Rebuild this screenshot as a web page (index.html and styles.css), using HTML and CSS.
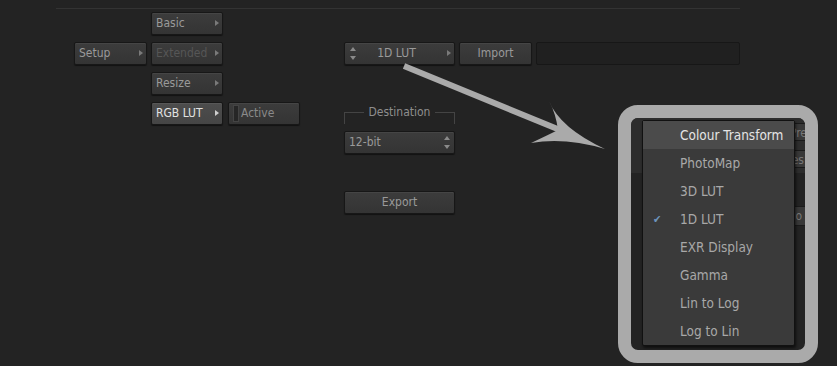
FILE: index.html
```html
<!DOCTYPE html>
<html lang="en">
<head>
    <meta charset="UTF-8">
    <title>RGB LUT Setup</title>
    <link rel="stylesheet" href="styles.css">
</head>
<body>
    <div class="rule"></div>
    <div class="panel">
        <div class="col col-setup">
            <div class="btn btn-menu">Setup<span class="tri"></span></div>
        </div>
        <div class="col col-sub">
            <div class="btn btn-menu">Basic<span class="tri"></span></div>
            <div class="btn btn-menu disabled">Extended<span class="tri"></span></div>
            <div class="btn btn-menu">Resize<span class="tri"></span></div>
            <div class="btn btn-menu selected">RGB LUT<span class="tri"></span></div>
        </div>
        <div class="col col-active">
            <div class="btn btn-toggle"><span class="led"></span>Active</div>
        </div>
        <div class="col col-lut">
            <div class="lut-row">
                <div class="btn btn-lut">
                    <span class="spin spin-left"><i class="up"></i><i class="down"></i></span>
                    1D LUT<span class="tri"></span>
                </div>
                <div class="btn btn-import">Import</div>
                <div class="path-field"></div>
            </div>
            <div class="group">
                <div class="group-title"><span>Destination</span></div>
            </div>
            <div class="btn btn-select">12-bit
                <span class="spin spin-right"><i class="up"></i><i class="down"></i></span>
            </div>
            <div class="btn btn-export">Export</div>
        </div>
    </div>

    <!-- zoomed call-out of the LUT type menu -->
    <div class="callout">
        <div class="callout-band"></div>
        <div class="peek peek-1">Pre</div>
        <div class="peek peek-2">es</div>
        <div class="peek peek-3">o</div>
        <ul class="menu">
            <li class="hover">Colour Transform</li>
            <li>PhotoMap</li>
            <li>3D LUT</li>
            <li class="checked">1D LUT</li>
            <li>EXR Display</li>
            <li>Gamma</li>
            <li>Lin to Log</li>
            <li>Log to Lin</li>
        </ul>
    </div>

    <svg class="arrow" width="837" height="366" viewBox="0 0 837 366">
        <line x1="404" y1="66" x2="560" y2="130" stroke="#aaaaaa" stroke-width="6"/>
        <path d="M549 101 Q560 128 605 149 Q565 137 531 143 Q548 135 558 130 Q556 114 549 101 Z" fill="#aaaaaa"/>
    </svg>
</body>
</html>
```

FILE: styles.css
```css
body {
    margin: 0;
    padding: 0;
    width: 837px;
    height: 366px;
    overflow: hidden;
    position: relative;
    background-color: #232323;
    font-family: "DejaVu Sans Condensed", "DejaVu Sans", sans-serif;
    font-stretch: condensed;
    font-size: 12px;
    color: #9a9a9a;
}
.rule {
    margin: 8px 0 0 56px;
    width: 684px;
    height: 1px;
    background-color: #333;
}
.panel {
    display: flex;
    align-items: flex-start;
    padding: 3px 0 0 74px;
}
.col {
    display: flex;
    flex-direction: column;
    gap: 7px;
}
.col-setup {
    padding-top: 30px;
    margin-right: 4px;
}
.col-sub {
    margin-right: 5px;
}
.col-active {
    padding-top: 90px;
    margin-right: 44px;
}
.col-lut {
    padding-top: 30px;
    gap: 0;
}

/* buttons */
.btn {
    position: relative;
    box-sizing: border-box;
    height: 23px;
    line-height: 21px;
    border: 1px solid #171717;
    border-radius: 2px;
    background: linear-gradient(#3c3c3c, #343434);
    box-shadow: inset 0 1px 0 #454545, 0 1px 1px rgba(0, 0, 0, 0.5);
    white-space: nowrap;
}
.btn-menu {
    width: 73px;
    padding-left: 4px;
}
.col-sub .btn-menu {
    width: 72px;
}
.btn-menu.disabled {
    color: #565656;
}
.btn-menu.selected {
    background: linear-gradient(#4d4d4d, #454545);
    box-shadow: inset 0 1px 0 #575757, 0 1px 1px rgba(0, 0, 0, 0.5);
    color: #e2e2e2;
}
.tri {
    position: absolute;
    right: 3px;
    top: 7px;
    width: 0;
    height: 0;
    border-top: 3.5px solid transparent;
    border-bottom: 3.5px solid transparent;
    border-left: 4px solid #7a7a7a;
}
.selected .tri {
    border-left-color: #cfcfcf;
}
.btn-toggle {
    width: 72px;
    padding-left: 12px;
    color: #8a8a8a;
}
.led {
    position: absolute;
    left: 4px;
    top: 2px;
    width: 4px;
    height: 15px;
    background-color: #262626;
    border: 1px solid #444;
}

.lut-row {
    display: flex;
    gap: 4px;
}
.btn-lut {
    width: 111px;
    text-align: center;
    padding-right: 6px;
}
.btn-import {
    width: 73px;
    text-align: center;
}
.path-field {
    box-sizing: border-box;
    width: 204px;
    height: 23px;
    border: 1px solid #171717;
    border-radius: 2px;
    background-color: #202020;
}
.spin {
    position: absolute;
    top: 4px;
    display: flex;
    flex-direction: column;
    gap: 5px;
}
.spin-left {
    left: 5px;
}
.spin-right {
    right: 4px;
}
.spin i {
    display: block;
    width: 0;
    height: 0;
    border-left: 3.5px solid transparent;
    border-right: 3.5px solid transparent;
}
.spin .up {
    border-bottom: 4px solid #8a8a8a;
}
.spin .down {
    border-top: 4px solid #8a8a8a;
}

.group {
    margin-top: 47px;
    width: 111px;
    height: 12px;
    box-sizing: border-box;
    border: 1px solid #444;
    border-bottom: none;
}
.group-title {
    margin-top: -8px;
    text-align: center;
    line-height: 14px;
}
.group-title span {
    background-color: #232323;
    padding: 0 5px;
    color: #8e8e8e;
}
.btn-select {
    margin-top: 7px;
    width: 111px;
    padding-left: 4px;
}
.btn-export {
    margin-top: 37px;
    width: 111px;
    text-align: center;
}

/* call-out frame */
.callout {
    position: absolute;
    left: 618px;
    top: 105px;
    width: 200px;
    height: 258px;
    box-sizing: border-box;
    border: 13px solid #aaaaaa;
    border-radius: 20px;
    background-color: #232323;
    overflow: hidden;
}
.callout-band {
    height: 55px;
    background-color: #2d2d2d;
}
.peek {
    position: absolute;
    left: 150px;
    width: 40px;
    height: 18px;
    line-height: 18px;
    box-sizing: border-box;
    border: 1px solid #1a1a1a;
    border-radius: 2px;
    background-color: #383838;
    color: #777;
    text-align: right;
    padding-right: 14px;
}
.peek-1 {
    top: 5px;
    padding-right: 13px;
}
.peek-2 {
    top: 32px;
    padding-right: 16px;
}
.peek-3 {
    top: 88px;
    height: 20px;
    padding-right: 18px;
}
.menu {
    position: absolute;
    left: 11px;
    top: 2px;
    width: 153px;
    margin: 0;
    padding: 0;
    list-style: none;
    box-sizing: border-box;
    border: 1px solid #111;
    border-radius: 2px;
    background-color: #3a3a3a;
    box-shadow: 1px 2px 3px rgba(0, 0, 0, 0.6);
    font-size: 13.5px;
    color: #a8a8a8;
}
.menu li {
    position: relative;
    height: 28px;
    line-height: 28px;
    padding-left: 37px;
}
.menu li.hover {
    background-color: #4b4b4b;
    color: #e4e4e4;
}
.menu li.checked::before {
    content: "\2714";
    position: absolute;
    left: 10px;
    top: 1px;
    font-size: 11px;
    color: #6d94bd;
}

.arrow {
    position: absolute;
    left: 0;
    top: 0;
    pointer-events: none;
}
```
